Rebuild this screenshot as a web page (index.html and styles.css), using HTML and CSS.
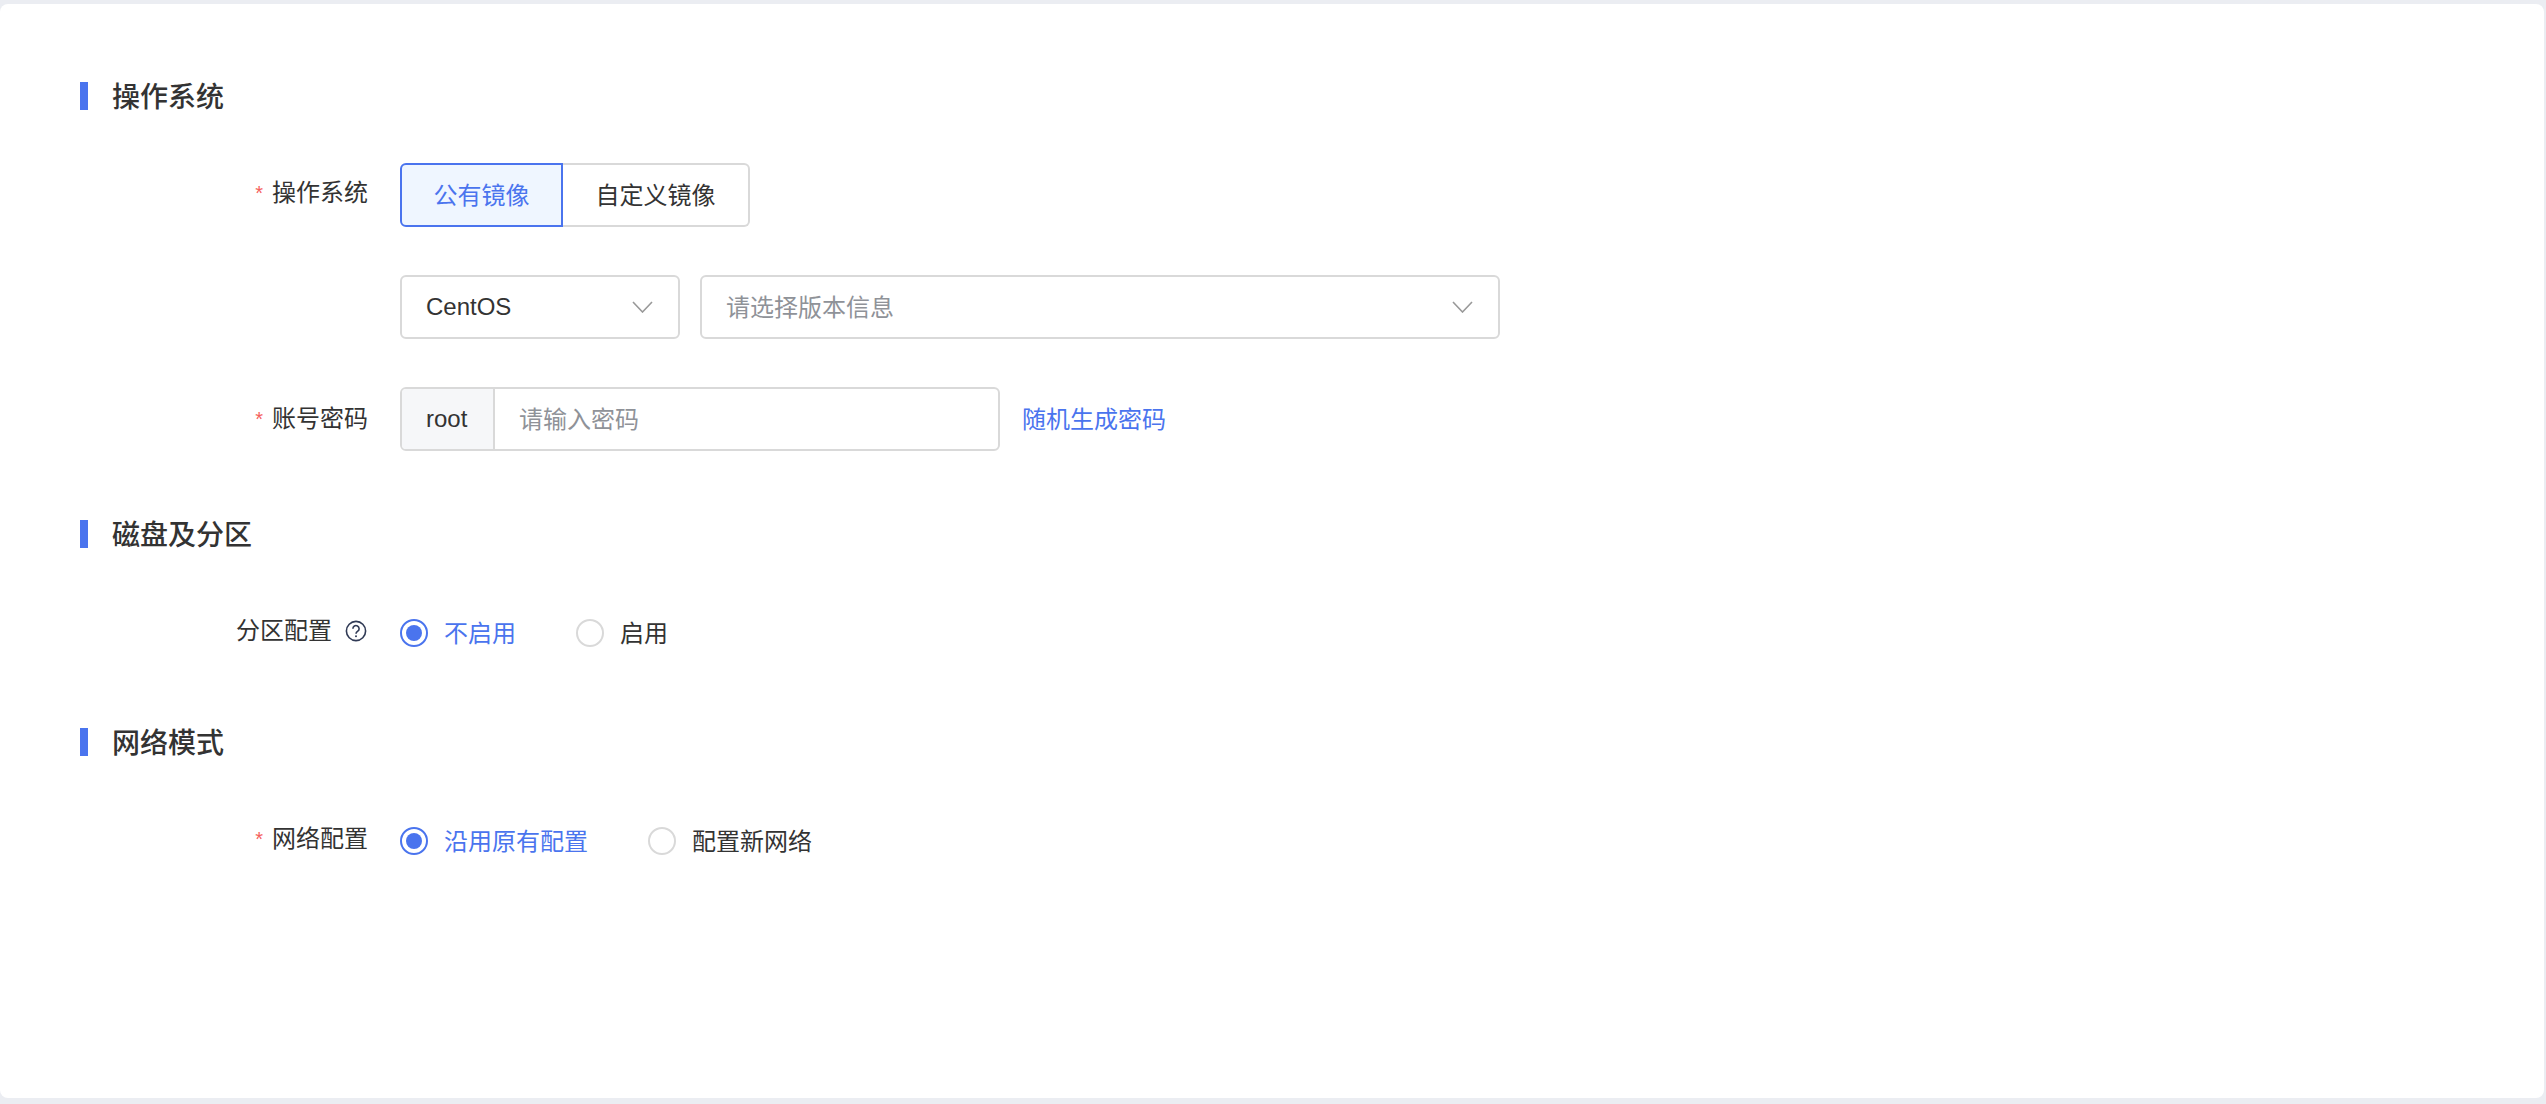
FILE: index.html
```html
<!DOCTYPE html>
<html lang="zh-CN">
<head>
<meta charset="utf-8">
<title>操作系统</title>
<link rel="stylesheet" href="styles.css">
</head>
<body>
<main class="card">
  <section class="section section-os">
    <h2 class="section-title">操作系统</h2>
    <div class="row">
      <div class="label label-up"><span class="req">*</span>操作系统</div>
      <div class="seg">
        <div class="seg-item seg-active"><span class="cjk">公有镜像</span></div>
        <div class="seg-item seg-plain"><span class="cjk">自定义镜像</span></div>
      </div>
    </div>
    <div class="row">
      <div class="label"></div>
      <div class="controls">
        <div class="select select-os"><span>CentOS</span>
          <svg class="chevron" viewBox="0 0 21 12"><polyline points="1,1 10.5,11 20,1"/></svg>
        </div>
        <div class="select select-ver"><span class="cjk placeholder">请选择版本信息</span>
          <svg class="chevron" viewBox="0 0 21 12"><polyline points="1,1 10.5,11 20,1"/></svg>
        </div>
      </div>
    </div>
    <div class="row">
      <div class="label"><span class="req">*</span>账号密码</div>
      <div class="controls controls-pwd">
        <div class="input-group">
          <div class="prefix">root</div>
          <div class="input"><span class="cjk placeholder">请输入密码</span></div>
        </div>
        <a class="cjk link">随机生成密码</a>
      </div>
    </div>
  </section>

  <section class="section">
    <h2 class="section-title">磁盘及分区</h2>
    <div class="row">
      <div class="label label-up">分区配置
        <svg class="help" viewBox="0 0 22 22">
          <circle cx="11" cy="11" r="9.6"/>
          <path d="M7.9 8.7a3.1 3.1 0 1 1 4.9 2.5c-1.1.8-1.8 1.3-1.8 2.6"/>
          <circle class="help-dot" cx="11" cy="16.2" r="1"/>
        </svg>
      </div>
      <div class="radios">
        <div class="radio radio-on"><i class="dot"></i><span class="cjk">不启用</span></div>
        <div class="radio"><i class="dot"></i><span class="cjk">启用</span></div>
      </div>
    </div>
  </section>

  <section class="section">
    <h2 class="section-title">网络模式</h2>
    <div class="row">
      <div class="label label-up"><span class="req">*</span>网络配置</div>
      <div class="radios">
        <div class="radio radio-on"><i class="dot"></i><span class="cjk">沿用原有配置</span></div>
        <div class="radio"><i class="dot"></i><span class="cjk">配置新网络</span></div>
      </div>
    </div>
  </section>
</main>
</body>
</html>
```

FILE: styles.css
```css
* { box-sizing: border-box; }
html, body { margin: 0; height: 100%; }
body {
  background: #ebedf2;
  padding: 4px 2px 6px 0;
  font-family: "Liberation Sans", "Noto Sans CJK SC", sans-serif;
  font-size: 24px;
  color: #333;
}
.card {
  height: 1094px;
  background: #fff;
  border-radius: 8px;
  padding: 78px 0 0 80px;
  overflow: hidden;
}
.section { margin-top: 63px; }
.section-os { margin-top: 0; padding-bottom: 6px; }
.section-title {
  margin: 0 0 53px;
  height: 28px;
  line-height: 31px;
  border-left: 8px solid #4a74ee;
  padding-left: 24px;
  font-size: 28px;
  font-weight: 500;
  color: #333;
}
.section > .row + .row { margin-top: 48px; }
.row { display: flex; align-items: center; height: 64px; gap: 32px; }
.cjk { display: block; padding-bottom: 3px; }
.label {
  width: 288px;
  flex: none;
  text-align: right;
  line-height: 34px;
  display: flex;
  justify-content: flex-end;
  align-items: center;
}
.label-up { padding-bottom: 5px; }
.req {
  color: #f5605c;
  margin-right: 9px;
  font-size: 20px;
  line-height: 1;
}
.seg { display: flex; height: 64px; }
.seg-item {
  display: flex;
  align-items: center;
  justify-content: center;
  border: 2px solid #d9d9d9;
}
.seg-active {
  width: 163px;
  background: #eff6ff;
  border-color: #4a74ee;
  color: #4a74ee;
  border-radius: 6px 0 0 6px;
}
.seg-plain {
  width: 187px;
  border-left: 0;
  border-radius: 0 6px 6px 0;
}
.controls { display: flex; gap: 20px; }
.controls-pwd { align-items: center; gap: 22px; }
.select {
  height: 64px;
  border: 2px solid #d9d9d9;
  border-radius: 6px;
  display: flex;
  align-items: center;
  justify-content: space-between;
  padding: 0 25px 0 24px;
}
.select-os { width: 280px; }
.select-ver { width: 800px; }
.chevron { width: 21px; height: 12px; flex: none; }
.chevron polyline { fill: none; stroke: #999; stroke-width: 1.6; }
.placeholder { color: #8f9298; }
.input-group {
  display: flex;
  width: 600px;
  height: 64px;
  border: 2px solid #d9d9d9;
  border-radius: 6px;
  overflow: hidden;
}
.prefix {
  width: 93px;
  flex: none;
  background: #f6f7f9;
  border-right: 2px solid #d9d9d9;
  display: flex;
  align-items: center;
  padding-left: 24px;
}
.input { flex: 1; display: flex; align-items: center; padding-left: 24px; }
.link { color: #4a74ee; }
.radios { display: flex; align-items: center; gap: 60px; }
.radio { display: flex; align-items: center; gap: 16px; }
.radio-on { color: #4a74ee; }
.dot {
  width: 28px;
  height: 28px;
  flex: none;
  border: 2px solid #d9d9d9;
  border-radius: 50%;
  display: flex;
  align-items: center;
  justify-content: center;
}
.radio-on .dot { border-color: #4a74ee; }
.radio-on .dot::after {
  content: "";
  width: 16px;
  height: 16px;
  border-radius: 50%;
  background: #4a74ee;
}
.help {
  width: 22px;
  height: 22px;
  margin: 0 1px 0 13px;
  flex: none;
  fill: none;
  stroke: #303a55;
  stroke-width: 1.6;
}
.help-dot { fill: #303a55; stroke: none; }
```
